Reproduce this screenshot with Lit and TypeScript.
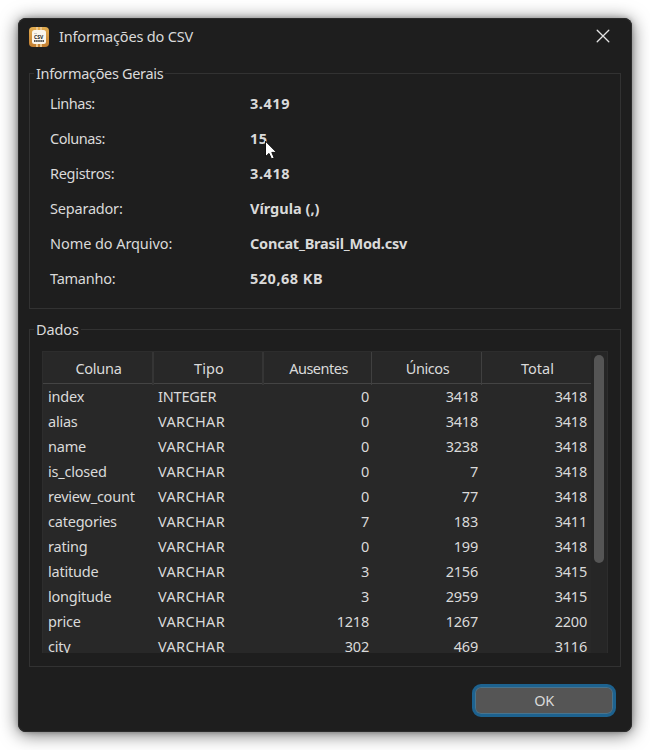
import { LitElement, html, css, svg } from "lit";
import { customElement } from "lit/decorators.js";
import { styleMap } from "lit/directives/style-map.js";

type Row = [string, string, string, string, string];

// label, label tracking, value, value tracking
const INFO: [string, number, string, number][] = [
  ["Linhas:", -0.5, "3.419", 0.55],
  ["Colunas:", -0.45, "15", 0.5],
  ["Registros:", -0.3, "3.418", 0.6],
  ["Separador:", -0.2, "Vírgula (,)", 0],
  ["Nome do Arquivo:", -0.07, "Concat_Brasil_Mod.csv", -0.22],
  ["Tamanho:", -0.25, "520,68 KB", 0.5],
];

const HEAD: [string, number][] = [
  ["Coluna", -0.25],
  ["Tipo", 0.1],
  ["Ausentes", -0.5],
  ["Únicos", -0.4],
  ["Total", 0],
];

const TYPE_TRACKING: Record<string, number> = { INTEGER: -0.2, VARCHAR: 0.35 };

const ROWS: Row[] = [
  ["index", "INTEGER", "0", "3418", "3418"],
  ["alias", "VARCHAR", "0", "3418", "3418"],
  ["name", "VARCHAR", "0", "3238", "3418"],
  ["is_closed", "VARCHAR", "0", "7", "3418"],
  ["review_count", "VARCHAR", "0", "77", "3418"],
  ["categories", "VARCHAR", "7", "183", "3411"],
  ["rating", "VARCHAR", "0", "199", "3418"],
  ["latitude", "VARCHAR", "3", "2156", "3415"],
  ["longitude", "VARCHAR", "3", "2959", "3415"],
  ["price", "VARCHAR", "1218", "1267", "2200"],
  ["city", "VARCHAR", "302", "469", "3116"],
];

const track = (n: number) => styleMap({ letterSpacing: `${n}px` });

@customElement("app-root")
export class AppRoot extends LitElement {
  static styles = css`
    :host {
      display: block;
      box-sizing: border-box;
      width: 650px;
      height: 750px;
      padding: 18px;
      overflow: hidden;
      background: #fff;
      color: #dadada;
      font: 14.5px/20px "Noto Sans", "Open Sans", sans-serif;
      letter-spacing: -0.22px;
      cursor: default;
    }
    * { box-sizing: border-box; }
    .dialog {
      position: relative;
      width: 614px;
      height: 714px;
      padding: 0 11px;
      display: flex;
      flex-direction: column;
      background: #1e1e1e;
      border-radius: 8px;
      box-shadow: inset 0 0 0 1px #2b2b2b, 0 2px 18px rgba(0, 0, 0, 0.6), 0 0 5px rgba(0, 0, 0, 0.25);
    }
    .bar {
      height: 55px;
      padding: 9px 11px 0 0;
      display: flex;
      align-items: flex-start;
    }
    .title { margin: -1px 0 0 10px; flex: 1; letter-spacing: -0.18px; }
    .close { margin-top: 2px; }
    .group {
      position: relative;
      border: 1px solid #323232;
      width: 592px;
    }
    .general { height: 236px; padding: 12px 20px 0; }
    .data { height: 338px; margin-top: 20px; padding: 21px 12px 0; }
    .legend {
      position: absolute;
      left: 4px;
      top: -11px;
      padding: 0 2px;
      background: #1e1e1e;
      letter-spacing: -0.33px;
    }
    .data .legend { letter-spacing: -0.1px; }
    .info {
      display: grid;
      grid-template-columns: 200px 1fr;
      grid-auto-rows: 35px;
      line-height: 35px;
    }
    .value { font-weight: 700; }
    .frame {
      width: 566px;
      height: 302px;
      display: flex;
      overflow: hidden;
      background: #282828;
      border: 1px solid #2d2d2d;
      border-bottom: 0;
    }
    .table { width: 548px; }
    .row {
      display: grid;
      grid-template-columns: 110px 110px 109px 110px 109px;
      height: 25px;
      line-height: 24px;
    }
    .head {
      grid-template-columns: 111px 110px 108px 110px 109px;
      height: 32px;
      line-height: 33px;
      text-align: center;
      border-bottom: 1px solid #444;
    }
    .head .cell { padding: 0 0 0 2px; border-right: 1px solid #404040; }
    .head .cell:nth-child(-n + 2) { border-right: 2px solid #353535; }
    .head .cell:last-child { border-right: 0; }
    .cell { padding: 0 3px 0 5px; white-space: nowrap; }
    .num { text-align: right; }
    .num + .num { padding-right: 4px; }
    .track { width: 16px; padding: 3px 0 0 3px; background: #262626; }
    .thumb { width: 10px; height: 208px; border-radius: 5px; background: #555; }
    .ok {
      align-self: flex-end;
      width: 144px;
      height: 33px;
      margin: 17px 5px 0 0;
      padding: 0 0 2px;
      font: inherit;
      color: #dadada;
      letter-spacing: -0.4px;
      background: #555;
      border: 3px solid #1d628f;
      border-radius: 9px;
      box-shadow: inset 0 0 0 1px #47748f;
    }
    .pointer { position: absolute; left: 246px; top: 122px; }
  `;

  render() {
    return html`
      <div class="dialog">
        <div class="bar">
          ${this.logo()}
          <span class="title">Informações do CSV</span>
          <svg class="close" width="14" height="14" viewBox="0 0 14 14">
            <path d="M1.2 1.2 12.8 12.8M12.8 1.2 1.2 12.8" stroke="#e4e4e4" stroke-width="1.3" stroke-linecap="round" />
          </svg>
        </div>
        <section class="group general">
          <span class="legend">Informações Gerais</span>
          <div class="info">
            ${INFO.map(
              ([k, kt, v, vt]) => html`<span style=${track(kt)}>${k}</span><span class="value" style=${track(vt)}>${v}</span>`
            )}
          </div>
        </section>
        <section class="group data">
          <span class="legend">Dados</span>
          <div class="frame">
            <div class="table">
              <div class="row head">${HEAD.map(([h, t]) => html`<span class="cell" style=${track(t)}>${h}</span>`)}</div>
              ${ROWS.map(
                (r) => html`<div class="row">
                  ${r.map(
                    (c, i) => html`<span class="cell ${i > 1 ? "num" : ""}" style=${track(TYPE_TRACKING[c] ?? -0.22)}>${c}</span>`
                  )}
                </div>`
              )}
            </div>
            <div class="track"><div class="thumb"></div></div>
          </div>
        </section>
        <button class="ok">OK</button>
        <svg class="pointer" width="14" height="21" viewBox="0 0 14 21">
          <path d="M1.5 1.2V16.6L5 13.4 7.5 19 10.2 17.8 7.8 12.4H12.6Z" fill="#fff" stroke="#111" stroke-width="1" />
        </svg>
      </div>
    `;
  }

  private logo() {
    return html`<svg width="20" height="20" viewBox="0 0 20 20">
      <defs>
        <linearGradient id="gold" x1="0" y1="0" x2="0" y2="1">
          <stop offset="0" stop-color="#e3ad50" /><stop offset="1" stop-color="#c37e31" />
        </linearGradient>
      </defs>
      <rect width="20" height="20" rx="4" fill="url(#gold)" />
      <rect x="7" width="2" height="20" fill="#ecc68c" /><rect x="11" width="2" height="20" fill="#ecc68c" />
      <rect x="3" y="3" width="14" height="14" rx="2.5" fill="#fbf6ec" />
      ${svg`<text x="5" y="12" font-size="5" font-weight="700" letter-spacing="0" fill="#222">CSV</text>`}
      <path d="M5 14H15" stroke="#222" stroke-width="1.6" stroke-dasharray="1.6 .5" />
      <path d="M5 6.5H8" stroke="#c9c4bb" stroke-width=".8" />
    </svg>`;
  }
}
